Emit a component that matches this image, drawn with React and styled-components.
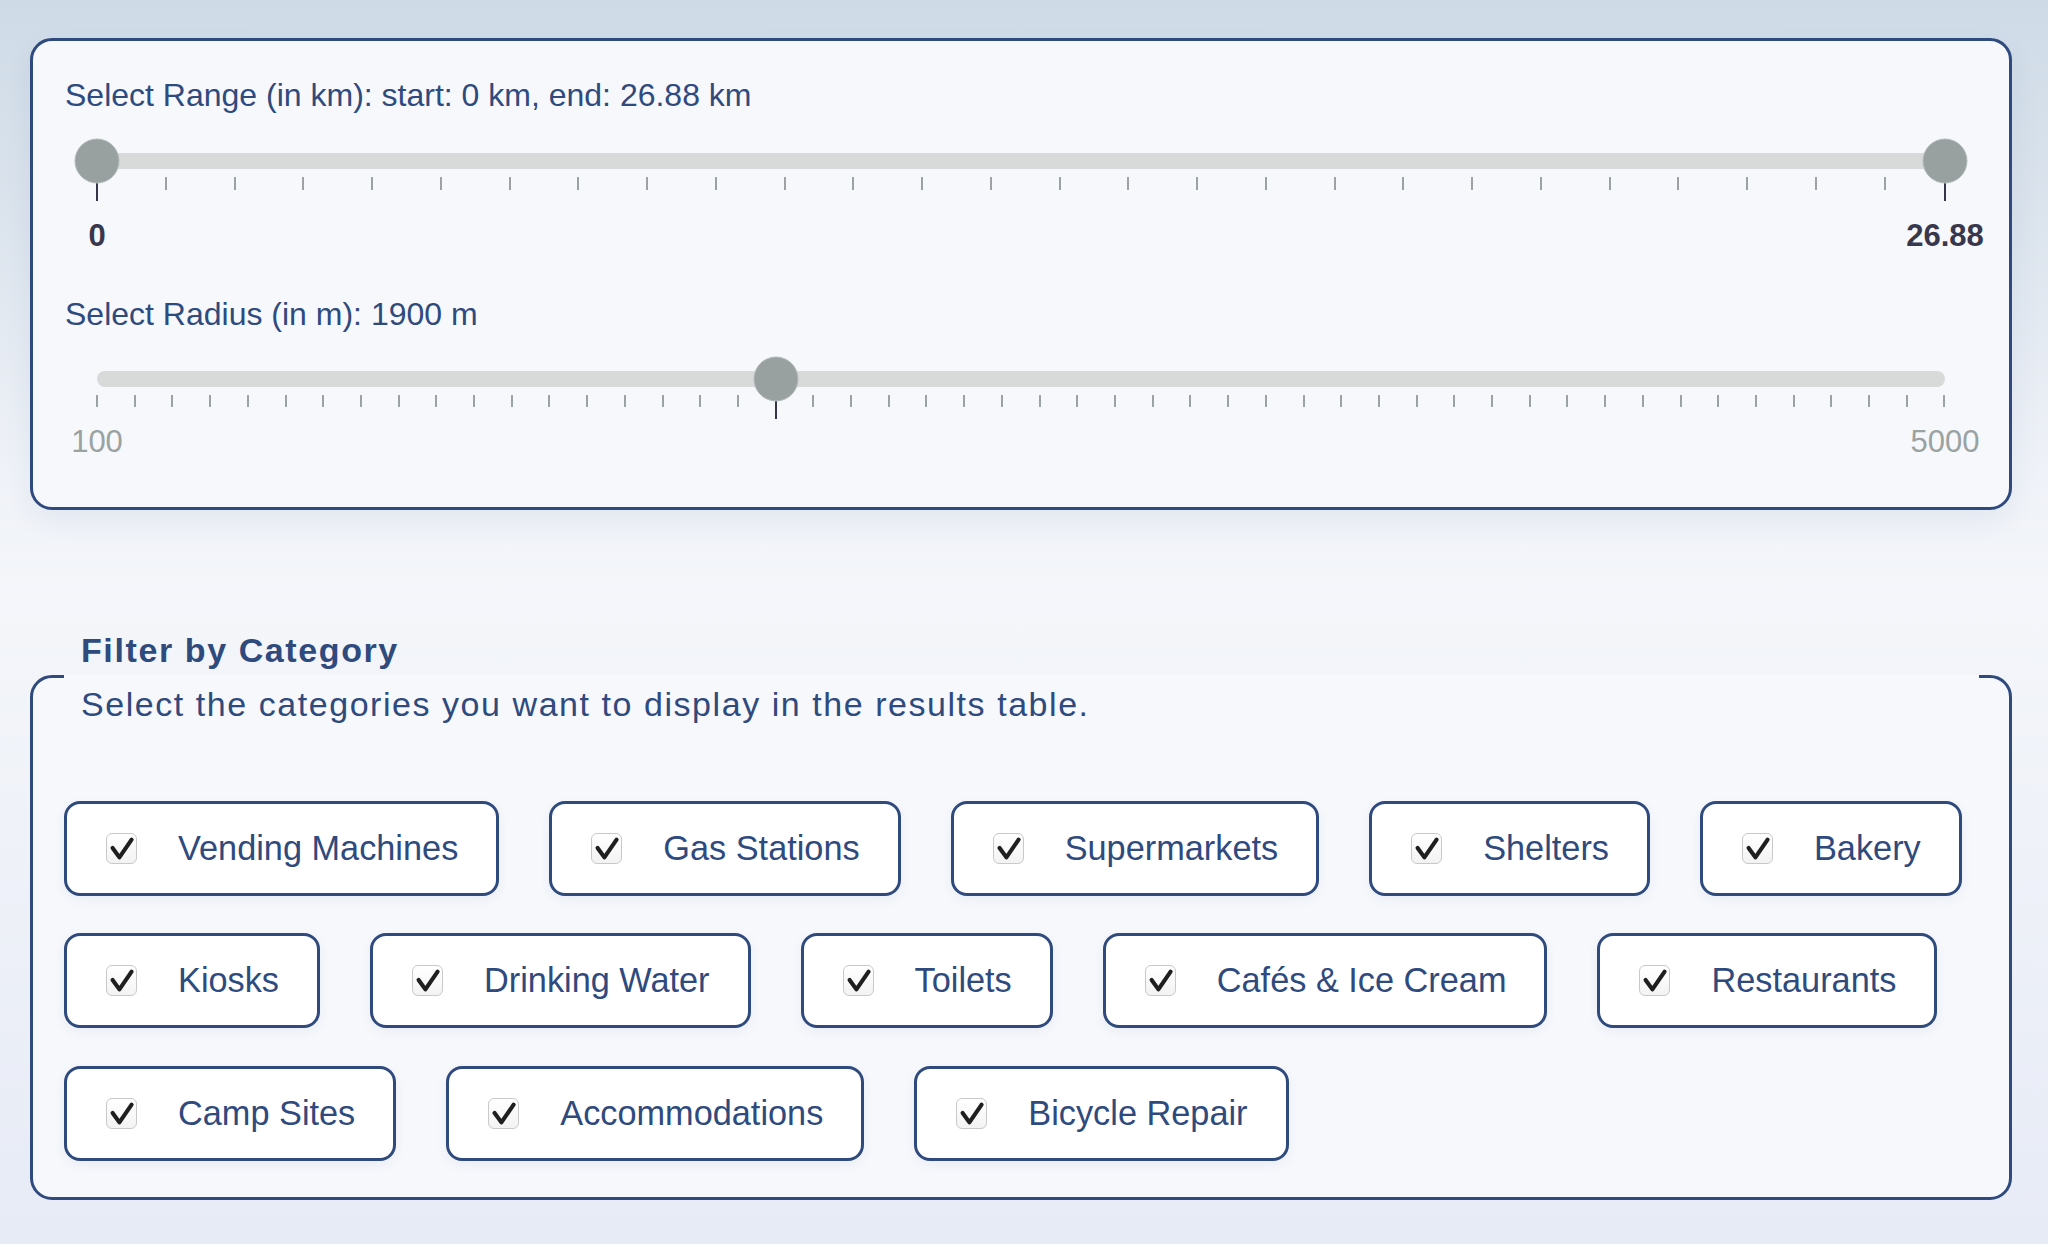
import React from "react";
import styled, { createGlobalStyle } from "styled-components";

const GlobalStyle = createGlobalStyle`
  html, body { margin: 0; padding: 0; }
  html {
    min-height: 100vh;
    background: linear-gradient(180deg, #cedbe7 0%, #dce4ed 18%, #eff2f8 38%, #f4f6fa 48%, #eef1f8 70%, #e7ebf6 100%);
  }
  body {
    font-family: "Liberation Sans", Arial, Helvetica, sans-serif;
    color: #2f4a7d;
  }
`;

const Page = styled.main`
  display: flex;
  flex-direction: column;
  gap: 113px;
  padding: 38px 36px 30px 30px;
`;

const Card = styled.section`
  display: flex;
  flex-direction: column;
  background: #f6f8fc;
  border: 3px solid #2f4a7d;
  border-radius: 22px;
  padding: 36px 32px 47px;
  box-shadow: 0 10px 28px rgba(47, 74, 125, 0.07);
`;

const FieldLabel = styled.div`
  font-size: 32px;
  line-height: 36px;
  margin-top: ${(p) => p.$gap || 0}px;
`;

const SliderWrap = styled.div`
  display: flex;
  flex-direction: column;
  margin: 0 32px;
`;

const Rail = styled.div`
  position: relative;
  display: flex;
  flex-direction: column;
  padding-top: ${(p) => p.$top}px;
`;

const Track = styled.div`
  height: 16px;
  border-radius: 8px;
  background: #d8dad9;
`;

const TickRow = styled.div`
  display: flex;
  justify-content: space-between;
  margin: 8px -1px 0;
`;

const Tick = styled.span`
  width: 2px;
  height: ${(p) => p.$len}px;
  background: #9aa2a2;
`;

const ActiveTick = styled.span`
  position: absolute;
  top: ${(p) => p.$center}px;
  width: 2px;
  height: 40px;
  margin-left: -1px;
  background: #34344a;
`;

const Thumb = styled.span`
  position: absolute;
  top: ${(p) => p.$center}px;
  width: 45px;
  height: 45px;
  box-sizing: border-box;
  border-radius: 50%;
  background: #98a0a0;
  border: 1px solid #b3baba;
  transform: translate(-50%, -50%);
`;

const LabelRow = styled.div`
  display: flex;
  justify-content: space-between;
  margin-top: ${(p) => p.$gap}px;
`;

const LabelAnchor = styled.div`
  width: 0;
  display: flex;
  justify-content: center;
`;

const ScaleLabel = styled.span`
  font-size: 31px;
  line-height: 36px;
  white-space: nowrap;
  font-weight: ${(p) => (p.$bold ? 700 : 400)};
  color: ${(p) => (p.$bold ? "#38374c" : "#9aa2a2")};
`;

function Slider({ min, max, step, values, labels, trackTop, tickLen, labelGap, boldLabels }) {
  const center = trackTop + 8;
  const pct = (v) => ((v - min) / (max - min)) * 100;
  const ticks = [];
  for (let v = min; v <= max + 1e-9; v += step) ticks.push(v);
  const lastTick = ticks[ticks.length - 1];
  return (
    <SliderWrap role="slider" aria-valuemin={min} aria-valuemax={max}>
      <Rail $top={trackTop}>
        <Track />
        <TickRow style={{ width: `calc(${pct(lastTick)}% + 2px)` }}>
          {ticks.map((v) => (
            <Tick key={v} $len={tickLen} />
          ))}
        </TickRow>
        {values.map((v, i) => (
          <ActiveTick key={"a" + i} $center={center} style={{ left: `${pct(v)}%` }} />
        ))}
        {values.map((v, i) => (
          <Thumb key={"t" + i} $center={center} style={{ left: `${pct(v)}%` }} />
        ))}
      </Rail>
      <LabelRow $gap={labelGap}>
        {labels.map((l) => (
          <LabelAnchor key={l}>
            <ScaleLabel $bold={boldLabels}>{l}</ScaleLabel>
          </LabelAnchor>
        ))}
      </LabelRow>
    </SliderWrap>
  );
}

const CategorySet = styled.fieldset`
  margin: 0;
  min-width: 0;
  background: #f6f8fc;
  border: 3px solid #2f4a7d;
  border-radius: 22px;
  padding: 70px 30px 36px 31px;
`;

const Legend = styled.legend`
  width: 100%;
  box-sizing: border-box;
  padding: 0 17px;
`;

const Heading = styled.h3`
  margin: 0;
  font-size: 34px;
  line-height: 54px;
  font-weight: 700;
  letter-spacing: 1.6px;
`;

const Subtitle = styled.p`
  margin: 0;
  font-size: 34px;
  line-height: 54px;
  letter-spacing: 1.55px;
`;

const Options = styled.div`
  display: flex;
  flex-wrap: wrap;
  gap: 37.5px 50px;
`;

const Option = styled.label`
  display: flex;
  align-items: center;
  gap: 41px;
  height: 95px;
  box-sizing: border-box;
  padding: 0 38px 0 39px;
  border: 3px solid #2f4a7d;
  border-radius: 16px;
  background: #ffffff;
  font-size: 34.3px;
  color: #2f4a7d;
  white-space: nowrap;
  box-shadow: 0 4px 12px rgba(47, 74, 125, 0.06);
`;

const Check = styled.span`
  flex: none;
  width: 31px;
  height: 31px;
  box-sizing: border-box;
  border: 1px solid #c9c9c9;
  border-radius: 6px;
  background: linear-gradient(180deg, #ffffff, #f3f3f3);
  display: flex;
`;

const categories = [
  "Vending Machines",
  "Gas Stations",
  "Supermarkets",
  "Shelters",
  "Bakery",
  "Kiosks",
  "Drinking Water",
  "Toilets",
  "Cafés & Ice Cream",
  "Restaurants",
  "Camp Sites",
  "Accommodations",
  "Bicycle Repair",
];

function CheckMark() {
  return (
    <svg width="29" height="29" viewBox="0 0 29 29">
      <path
        d="M5.6 14 L12.4 23.4 L24.6 5.6"
        fill="none"
        stroke="#1f1f1f"
        strokeWidth="4.1"
        strokeLinecap="round"
        strokeLinejoin="round"
      />
    </svg>
  );
}

export default function App() {
  return (
    <>
      <GlobalStyle />
      <Page>
        <Card>
          <FieldLabel>Select Range (in km): start: 0 km, end: 26.88 km</FieldLabel>
          <Slider
            min={0}
            max={26.88}
            step={1}
            values={[0, 26.88]}
            labels={["0", "26.88"]}
            trackTop={40}
            tickLen={13}
            labelGap={28}
            boldLabels
          />
          <FieldLabel $gap={42}>Select Radius (in m): 1900 m</FieldLabel>
          <Slider
            min={100}
            max={5000}
            step={100}
            values={[1900]}
            labels={["100", "5000"]}
            trackTop={39}
            tickLen={12}
            labelGap={16.5}
          />
        </Card>

        <CategorySet>
          <Legend>
            <Heading>Filter by Category</Heading>
            <Subtitle>Select the categories you want to display in the results table.</Subtitle>
          </Legend>
          <Options>
            {categories.map((c) => (
              <Option key={c}>
                <Check>
                  <CheckMark />
                </Check>
                {c}
              </Option>
            ))}
          </Options>
        </CategorySet>
      </Page>
    </>
  );
}
